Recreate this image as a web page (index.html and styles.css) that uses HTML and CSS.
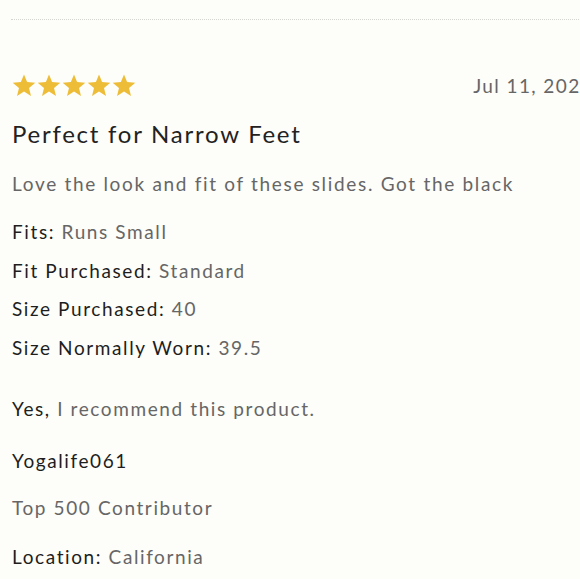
FILE: index.html
```html
<!DOCTYPE html>
<html>
<head>
<meta charset="utf-8">
<link rel="stylesheet" href="styles.css">
</head>
<body>
<div class="review">
  <div class="rule"></div>
  <div class="head">
    <div class="stars">
      <svg class="star" viewBox="0 0 24 24"><path d="M12 1.5l3.1 7.6 8.2.6-6.3 5.3 2 8-7-4.4-7 4.4 2-8L.7 9.7l8.2-.6z"/></svg>
      <svg class="star" viewBox="0 0 24 24"><path d="M12 1.5l3.1 7.6 8.2.6-6.3 5.3 2 8-7-4.4-7 4.4 2-8L.7 9.7l8.2-.6z"/></svg>
      <svg class="star" viewBox="0 0 24 24"><path d="M12 1.5l3.1 7.6 8.2.6-6.3 5.3 2 8-7-4.4-7 4.4 2-8L.7 9.7l8.2-.6z"/></svg>
      <svg class="star" viewBox="0 0 24 24"><path d="M12 1.5l3.1 7.6 8.2.6-6.3 5.3 2 8-7-4.4-7 4.4 2-8L.7 9.7l8.2-.6z"/></svg>
      <svg class="star" viewBox="0 0 24 24"><path d="M12 1.5l3.1 7.6 8.2.6-6.3 5.3 2 8-7-4.4-7 4.4 2-8L.7 9.7l8.2-.6z"/></svg>
    </div>
    <div class="date">Jul 11, 2024</div>
  </div>
  <h2 class="title">Perfect for Narrow Feet</h2>
  <p class="body">Love the look and fit of these slides. Got the black</p>
  <ul class="facts">
    <li><span class="label">Fits:</span> Runs Small</li>
    <li><span class="label">Fit Purchased:</span> Standard</li>
    <li><span class="label">Size Purchased:</span> 40</li>
    <li><span class="label">Size Normally Worn:</span> 39.5</li>
  </ul>
  <p class="recommend"><span class="label">Yes,</span> I recommend this product.</p>
  <p class="author">Yogalife061</p>
  <p class="badge">Top 500 Contributor</p>
  <p class="location"><span class="label">Location:</span> California</p>
</div>
</body>
</html>
```
FILE: styles.css
```css
html, body {
  margin: 0;
  padding: 0;
  background: #fdfdf9;
  overflow: hidden;
}
body {
  width: 580px;
  height: 579px;
  font-family: Lato, "Noto Sans", sans-serif;
  color: #666;
}
.review {
  width: 592px;
  padding: 19px 0 0 11px;
}
.rule {
  border-top: 1px dotted #d4d4d0;
  height: 0;
}
.head {
  display: flex;
  justify-content: space-between;
  align-items: center;
  margin-top: 52px;
  height: 26px;
  padding-left: 1px;
}
.stars {
  display: flex;
  gap: 1px;
}
.star {
  width: 24px;
  height: 24px;
  fill: #eebd37;
}
.date {
  font-size: 19px;
  letter-spacing: 1.4px;
  color: #666;
  padding-right: 10px;
}
.title {
  margin: 22px 0 0 1px;
  font-size: 24px;
  font-weight: 400;
  color: #222;
  letter-spacing: 1.75px;
  line-height: 28px;
}
.body {
  margin: 22px 0 0 1px;
  font-size: 19px;
  line-height: 28px;
  letter-spacing: 1.68px;
}
.facts {
  list-style: none;
  margin: 15px 0 0 1px;
  padding: 0;
  font-size: 19px;
  line-height: 38.5px;
  letter-spacing: 1.6px;
}
.label {
  color: #1e1e1e;
}
.recommend, .author, .badge, .location {
  margin: 0 0 0 1px;
  font-size: 19px;
  letter-spacing: 1.6px;
  line-height: 28px;
}
.recommend { margin-top: 28px; }
.author { margin-top: 24px; color: #1e1e1e; }
.badge { margin-top: 19px; }
.location { margin-top: 21px; }
```
